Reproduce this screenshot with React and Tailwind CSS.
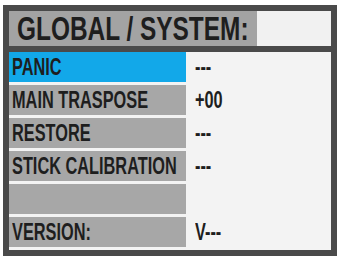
import React from "react";

const rows = [
  { label: "PANIC", value: "---", active: true },
  { label: "MAIN TRASPOSE", value: "+00" },
  { label: "RESTORE", value: "---" },
  { label: "STICK CALIBRATION", value: "---" },
  { label: "", value: "" },
  { label: "VERSION:", value: "V---" },
];

export default function App() {
  return (
    <div className="w-[339px] h-[257px] bg-white pt-[5px] pl-[3px]" style={{ fontFamily: '"Liberation Sans", Arial, sans-serif' }}>
      <div className="w-[334px] h-[251px] bg-[#4a4a4a] p-[6px] flex flex-col gap-[6px]">
        <div className="h-[35px] flex shrink-0">
          <div className="w-[248px] bg-[#a3a3a3] flex items-center pl-[8px] overflow-hidden">
            <span className="text-[33px] font-bold text-[#1e1e1e] leading-none whitespace-nowrap origin-left scale-x-[0.74] inline-block">
              GLOBAL / SYSTEM:
            </span>
          </div>
          <div className="flex-1 bg-[#f1f1f1]" />
        </div>
        <div className="flex-1 bg-[#f3f3f3] flex flex-col gap-[3px] pb-[2px]">
          {rows.map((r, i) => (
            <div key={i} className="h-[30px] flex shrink-0">
              <div
                className={
                  "w-[177px] flex items-center pl-[3px] overflow-visible " +
                  (r.active ? "bg-[#12a8e9]" : "bg-[#a7a7a7]")
                }
              >
                <span className="text-[24px] font-bold text-[#1e1e1e] leading-none whitespace-nowrap origin-left scale-x-[0.68] inline-block">
                  {r.label}
                </span>
              </div>
              <div className="flex-1 flex items-center pl-[9px]">
                <span className="text-[24px] font-bold text-[#1e1e1e] leading-none whitespace-nowrap origin-left scale-x-[0.68] inline-block">
                  {r.value}
                </span>
              </div>
            </div>
          ))}
        </div>
      </div>
    </div>
  );
}
